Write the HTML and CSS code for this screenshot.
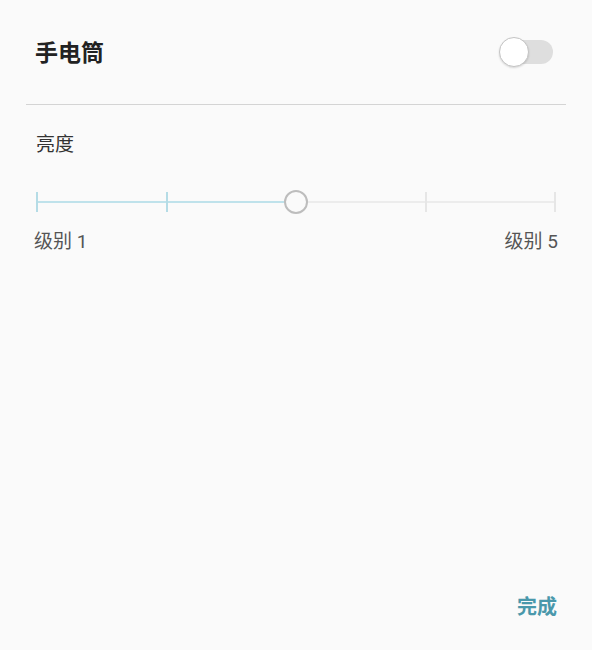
FILE: index.html
```html
<!doctype html>
<html>
<head>
  <meta charset="utf-8">
  <title>手电筒</title>
  <link rel="stylesheet" href="styles.css">
</head>
<body>
  <div class="panel">
    <div class="header">
      <span class="title">手电筒</span>
      <span class="switch"><span class="knob"></span></span>
    </div>
    <hr class="divider">

    <div class="section">
      <div class="label">亮度</div>
      <div class="slider">
        <div class="track"></div>
        <div class="track active" style="width: 50%"></div>
        <span class="tick on" style="left: 0%"></span>
        <span class="tick on" style="left: 25%"></span>
        <span class="tick" style="left: 75%"></span>
        <span class="tick" style="left: 100%"></span>
        <span class="thumb" style="left: 50%"></span>
      </div>
      <div class="scale">
        <span>级别 1</span>
        <span>级别 5</span>
      </div>
    </div>

    <div class="footer">
      <a class="done" href="#">完成</a>
    </div>
  </div>
</body>
</html>
```

FILE: styles.css
```css
body {
  margin: 0;
  background: #fafafa;
  font-family: Roboto, "Noto Sans CJK SC", sans-serif;
}
.panel {
  height: 650px;
  display: flex;
  flex-direction: column;
}

.header {
  height: 104px;
  display: flex;
  align-items: center;
  justify-content: space-between;
  padding: 0 39px 0 35px;
}
.title {
  font-size: 23px;
  line-height: 30px;
  font-weight: bold;
  color: #222;
  margin-top: 3px;
}
.switch {
  position: relative;
  width: 53px;
  height: 24px;
  border-radius: 12px;
  background: #dedede;
}
.knob {
  position: absolute;
  left: -1px;
  top: -3px;
  width: 28px;
  height: 28px;
  border-radius: 50%;
  background: #fff;
  border: 1px solid #c4c4c4;
  box-shadow: 0 1px 2px rgba(0, 0, 0, .15);
}

.divider {
  margin: 0 26px;
  border: 0;
  border-top: 1px solid #d4d4d4;
}

.section { padding: 0 35px 0 36px; }
.label {
  margin-top: 27px;
  font-size: 19px;
  line-height: 26px;
  color: #333;
}

.slider {
  position: relative;
  margin: 34px 0 0 1px;
  width: 518px;
  height: 22px;
}
.track {
  position: absolute;
  left: 0;
  right: 0;
  top: 9px;
  height: 2px;
  background: #ececec;
}
.track.active {
  right: auto;
  background: #bfe2eb;
}
.tick {
  position: absolute;
  top: 0;
  width: 2px;
  height: 20px;
  margin-left: -1px;
  background: #e6e6e6;
}
.tick.on { background: #b5dce6; }
.thumb {
  position: absolute;
  top: -2px;
  width: 20px;
  height: 20px;
  margin-left: -12px;
  border: 2px solid #bdbdbd;
  border-radius: 50%;
  background: #fafafa;
}

.scale {
  display: flex;
  justify-content: space-between;
  margin: 15px -1px 0 -2px;
  font-size: 19px;
  line-height: 26px;
  color: #555;
}

.footer {
  margin-top: auto;
  display: flex;
  justify-content: flex-end;
  padding: 0 35px 29px;
}
.done {
  font-size: 20px;
  line-height: 28px;
  font-weight: bold;
  color: #4a98ab;
  text-decoration: none;
}
```
